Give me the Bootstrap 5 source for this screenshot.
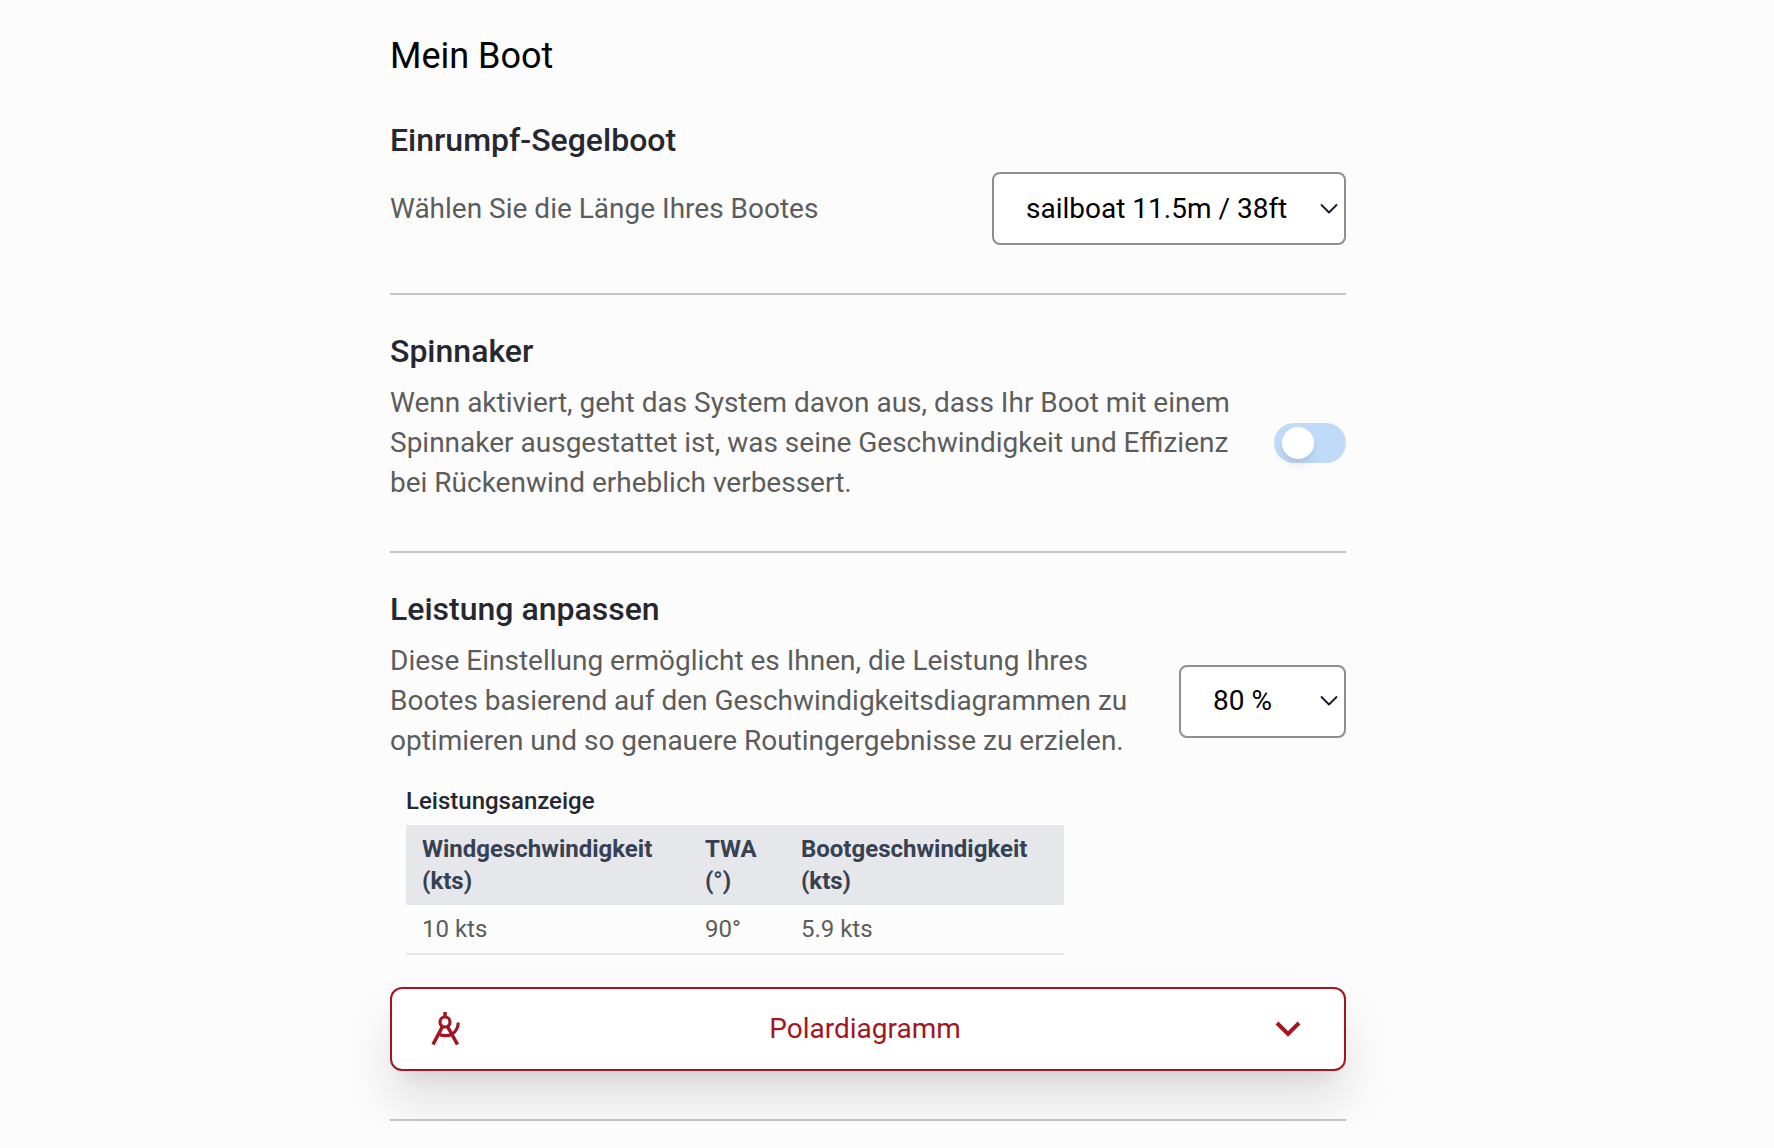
<!DOCTYPE html>
<html lang="de">
<head>
<meta charset="utf-8">
<meta name="viewport" content="width=device-width, initial-scale=1">
<title>Mein Boot</title>
<link href="https://cdn.jsdelivr.net/npm/bootstrap@5.3.0/dist/css/bootstrap.min.css" rel="stylesheet">
<style>
  body { background: #fcfcfc; color: #5c5c5c; font-family: Roboto, "Liberation Sans", sans-serif; font-size: 28px; line-height: 40px; }
  .page-wrap { padding-right: 38px; }
  .settings { width: 100%; max-width: 956px; padding-top: 32px; }
  .page-title { font-size: 36px; line-height: 48px; font-weight: 400; color: #000; margin-bottom: 4px; }
  .setting { padding: 36px 0 48px; border-bottom: 2px solid #c6c6c6; }
  .setting-title { font-size: 32px; line-height: 40px; font-weight: 500; color: #27272f; margin-bottom: 12px; }
  .setting-row { gap: 40px; }
  .boat-select {
    width: auto; height: 73px; padding: 0 56px 0 32px; font-size: 28px; line-height: 40px; color: #000;
    background-color: #fff; border: 2px solid #8e8e8e; border-radius: 8px;
    background-image: url("data:image/svg+xml,%3csvg xmlns='http://www.w3.org/2000/svg' viewBox='0 0 20 20'%3e%3cpath fill='none' stroke='%23111827' stroke-width='1.8' stroke-linecap='round' stroke-linejoin='round' d='M2.500 6 10 13.500 17.500 6'/%3e%3c/svg%3e");
    background-size: 20px 20px; background-position: right 5px center;
  }
  .percent-select { width: 167px; }
  .form-switch { padding: 0; min-height: 0; margin: 0; }
  .form-switch .form-check-input {
    float: none; display: block; width: 72px; height: 40px; margin: 0; padding: 4px 8px; border: 0;
    border-radius: 20px; background-color: #bfdbf7; background-image: none;
  }
  .form-check-input::before {
    content: ""; display: block; width: 32px; height: 32px; border-radius: 50%; background: #fff;
    box-shadow: 0 8px 12px -2px rgba(0, 0, 0, .08), 0 4px 8px -4px rgba(0, 0, 0, .1);
  }
  .form-check-input:checked { background-color: #3b82f6; }
  .form-check-input:checked::before { margin-left: 24px; }
  .readout { margin: 24px 16px 32px; font-size: 24px; line-height: 32px; }
  .readout-title { font-size: 24px; line-height: 32px; font-weight: 500; color: #27272f; margin-bottom: 8px; }
  .readout-table { width: 100%; max-width: 658px; table-layout: fixed; margin: 0; }
  .readout-table th { padding: 8px 16px; background: #e6e7eb; color: #374151; font-weight: 700; vertical-align: top; }
  .readout-table td { padding: 8px 16px; color: #5c5c5c; border-bottom: 2px solid #e6e7eb; }
  .col-wind { width: 43%; }
  .col-angle { width: 96px; }
  .polar-btn {
    height: 84px; padding: 0 36px; color: #a31621; background: #fff; border: 2px solid #a31621; border-radius: 12px;
    font-size: 28px; line-height: 40px;
    box-shadow: 0 32px 52px rgba(0, 0, 0, .11), 0 16px 20px -12px rgba(0, 0, 0, .09);
  }
  .polar-btn:hover { color: #a31621; background: #fff8f8; border-color: #a31621; }
</style>
</head>
<body>
<div class="page-wrap">
<main class="settings mx-auto">
  <h1 class="page-title">Mein Boot</h1>

  <section class="setting">
    <h2 class="setting-title">Einrumpf-Segelboot</h2>
    <div class="setting-row d-flex align-items-center justify-content-between">
      <label for="length">Wählen Sie die Länge Ihres Bootes</label>
      <select id="length" class="form-select boat-select flex-shrink-0">
        <option>sailboat 11.5m / 38ft</option>
      </select>
    </div>
  </section>

  <section class="setting">
    <h2 class="setting-title">Spinnaker</h2>
    <div class="setting-row d-flex align-items-center justify-content-between">
      <label for="spinnaker">Wenn aktiviert, geht das System davon aus, dass Ihr Boot mit einem Spinnaker ausgestattet ist, was seine Geschwindigkeit und Effizienz bei Rückenwind erheblich verbessert.</label>
      <div class="form-check form-switch flex-shrink-0">
        <input id="spinnaker" class="form-check-input" type="checkbox" role="switch">
      </div>
    </div>
  </section>

  <section class="setting">
    <h2 class="setting-title">Leistung anpassen</h2>
    <div class="setting-row d-flex align-items-center justify-content-between">
      <label for="performance">Diese Einstellung ermöglicht es Ihnen, die Leistung Ihres Bootes basierend auf den Geschwindigkeitsdiagrammen zu optimieren und so genauere Routingergebnisse zu erzielen.</label>
      <select id="performance" class="form-select boat-select percent-select flex-shrink-0">
        <option>80 %</option>
      </select>
    </div>

    <div class="readout">
      <h3 class="readout-title">Leistungsanzeige</h3>
      <table class="readout-table">
        <colgroup><col class="col-wind"><col class="col-angle"><col></colgroup>
        <thead>
          <tr><th scope="col">Windgeschwindigkeit (kts)</th><th scope="col">TWA (°)</th><th scope="col">Bootgeschwindigkeit (kts)</th></tr>
        </thead>
        <tbody>
          <tr><td>10 kts</td><td>90°</td><td>5.9 kts</td></tr>
        </tbody>
      </table>
    </div>

    <button type="button" class="btn polar-btn w-100 d-flex align-items-center justify-content-between">
      <svg width="36" height="40" viewBox="0 0 36 40" fill="none" stroke="currentColor" stroke-width="3.200" aria-hidden="true">
        <circle cx="17" cy="13" r="5"/>
        <path d="M17 3v5M14.500 17.500 5 35.500M19.500 17.500 29.500 35.500" stroke-width="3.600"/>
        <path d="M10.500 25c3 1.500 9 2.500 13 .5 4-2.300 6.500-6.500 6.800-12"/>
      </svg>
      <span>Polardiagramm</span>
      <svg width="42" height="40" viewBox="0 0 42 40" fill="none" stroke="currentColor" stroke-width="4" aria-hidden="true">
        <path d="m11 14 11 11 11-11"/>
      </svg>
    </button>
  </section>
</main>
</div>
<script src="https://cdn.jsdelivr.net/npm/bootstrap@5.3.0/dist/js/bootstrap.bundle.min.js"></script>
</body>
</html>
